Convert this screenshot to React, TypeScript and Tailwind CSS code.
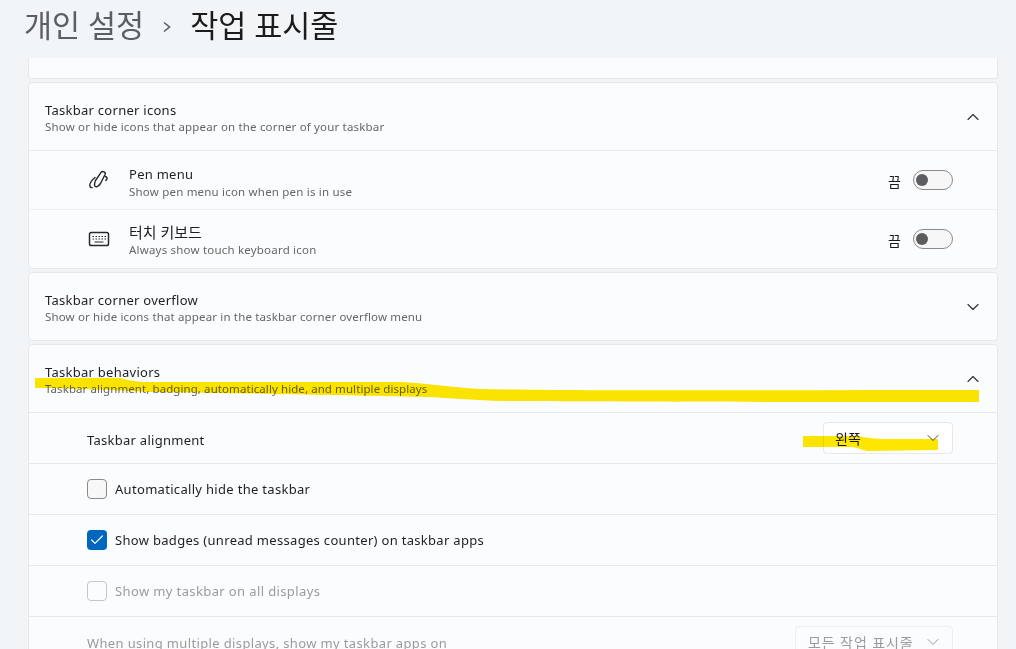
import React from 'react';
import { ChevronDown, ChevronUp, Check } from 'lucide-react';

const font = { fontFamily: '"Noto Sans", "Noto Sans CJK KR", sans-serif' };

function PenIcon() {
  return (
    <svg width="22" height="22" viewBox="0 0 22 22" fill="none" stroke="#26282b" strokeWidth="1.4" strokeLinecap="round" strokeLinejoin="round">
      <path d="M7.500 11.500 13.200 3.200c1.200-1.500 4.800-.2 4 2L12.500 14.500c-.9 1.400-2 2.600-3.500 3.200-1.300.3-2.600-.4-2.500-1.800.1-1.600.2-3 1-4.400Z" />
      <path d="M17.300 7.500c1.500.4 2.300 1.600 1.500 2.800l-1 1.200" />
      <path d="M7 8.500C4.500 10.500 2.200 13.500 1.800 16c-.2 1.500.8 2.800 2.400 2.600" />
    </svg>
  );
}

function KeyboardIcon() {
  return (
    <svg width="22" height="16" viewBox="0 0 22 16" fill="none" stroke="#26282b">
      <rect x="1.500" y="1.500" width="19" height="13" rx="1.800" strokeWidth="1.500" />
      <path d="M4.500 5.500h1.500M7.500 5.500H9M10.500 5.500H12M13.500 5.500H15M16.500 5.500H18M4.500 8h1.500M7.500 8H9M10.500 8H12M13.500 8H15M16.500 8H18M6.500 11h9" strokeWidth="1.100" />
    </svg>
  );
}

function Toggle() {
  return (
    <div className="flex items-center">
      <span className="w-[25px] text-[14px] leading-none text-[#1b1b1b] pt-[3px]">끔</span>
      <div className="w-[40px] h-[20px] rounded-full border border-[#8a8a8a] bg-[#f7f7f8] flex items-center pl-[2px]">
        <div className="w-[12px] h-[12px] rounded-full bg-[#5d5d5f]" />
      </div>
    </div>
  );
}

function CardHeader({ title, sub, open, subTracking }: { title: string; sub: string; open: boolean; subTracking: string }) {
  const Icon = open ? ChevronUp : ChevronDown;
  return (
    <div className="h-[67px] flex items-center justify-between pl-4 pr-[14px]">
      <div className="flex flex-col pt-[3px]">
        <span className="text-[13px] leading-[17px] tracking-[0.27px] text-[#1f1f1f]">{title}</span>
        <span className={`text-[11.500px] leading-[16px] text-[#666666] ${subTracking}`}>{sub}</span>
      </div>
      <Icon size={20} strokeWidth={1.400} color="#333" />
    </div>
  );
}

function IconRow({ icon, title, sub, border, korean }: { icon: React.ReactNode; title: string; sub: string; border: string; korean?: boolean }) {
  return (
    <div className={`h-[59px] flex items-center justify-between pl-[59px] pr-[44px] border-t ${border}`}>
      <div className="flex items-center">
        <div className="w-[22px] flex justify-center">{icon}</div>
        <div className={`flex flex-col ml-[19px] ${korean ? 'pt-[4px]' : 'pt-[5px]'}`}>
          <span className={`leading-[17px] text-[#1f1f1f] ${korean ? 'text-[15px]' : 'text-[13px] tracking-[0.27px]'}`}>{title}</span>
          <span className="text-[11.500px] leading-[17px] tracking-[0.2px] text-[#666666]">{sub}</span>
        </div>
      </div>
      <Toggle />
    </div>
  );
}

function CheckRow({ label, state }: { label: string; state: 'off' | 'on' | 'disabled' }) {
  return (
    <div className="h-[51px] flex items-center pl-[58px] border-t border-[#e6e8ea]">
      {state === 'on' && (
        <div className="w-[20px] h-[20px] rounded-[4px] bg-[#0067c0] flex items-center justify-center">
          <Check size={16} strokeWidth={1.800} color="#fff" />
        </div>
      )}
      {state === 'off' && <div className="w-[20px] h-[20px] rounded-[4px] border border-[#8a8a8a] bg-[#f7f7f8]" />}
      {state === 'disabled' && <div className="w-[20px] h-[20px] rounded-[4px] border border-[#c6c6c7] bg-[#fbfcfe]" />}
      <span className={`ml-2 pt-[2px] text-[13px] ${state === 'disabled' ? 'tracking-[0.38px] text-[#9b9b9c]' : 'tracking-[0.31px] text-[#1f1f1f]'}`}>{label}</span>
    </div>
  );
}

const card = 'bg-[#fbfcfe] border border-[#e6e8ea] rounded-[4px]';

export default function App() {
  return (
    <div className="relative h-[649px] w-[1016px] overflow-hidden bg-[#f2f5f8]" style={font}>
      {/* 제목 */}
      <div className="h-[58px] flex items-center pl-6 pb-[7px] text-[30.500px] leading-none">
        <span className="text-[#5c5f62]">개인 설정</span>
        <svg className="mx-[18px] mt-[3px]" width="10" height="12" viewBox="0 0 10 12" fill="none" stroke="#5c5f62" strokeWidth="1.600">
          <path d="M2 1.500 7.500 6 2 10.500" />
        </svg>
        <span className="text-[#1b1b1b]">작업 표시줄</span>
      </div>

      <div className="flex flex-col gap-[3px] pl-7 pr-[18px]">
        <div className={`${card} h-[21px] border-t-0 rounded-t-none`} />

        <div className={card}>
          <CardHeader title="Taskbar corner icons" sub="Show or hide icons that appear on the corner of your taskbar" open subTracking="tracking-[0.17px]" />
          <IconRow icon={<PenIcon />} title="Pen menu" sub="Show pen menu icon when pen is in use" border="border-[#e6e8ea]" />
          <IconRow icon={<KeyboardIcon />} title="터치 키보드" sub="Always show touch keyboard icon" border="border-[#eff1f3]" korean />
        </div>

        <div className={card}>
          <CardHeader title="Taskbar corner overflow" sub="Show or hide icons that appear in the taskbar corner overflow menu" open={false} subTracking="tracking-[0.15px]" />
        </div>

        <div className={card}>
          <CardHeader title="Taskbar behaviors" sub="Taskbar alignment, badging, automatically hide, and multiple displays" open subTracking="tracking-[0.08px]" />
          <div className="h-[51px] flex items-center justify-between pl-[58px] pr-[44px] border-t border-[#e6e8ea]">
            <span className="pt-[6px] text-[13px] tracking-[0.27px] text-[#1f1f1f]">Taskbar alignment</span>
            <div className="w-[130px] h-[32px] rounded-[4px] border border-[#e6e8ea] bg-white flex items-center justify-between pl-[11px] pr-[9px]">
              <span className="text-[14px] text-[#1b1b1b]">왼쪽</span>
              <ChevronDown size={20} strokeWidth={1.200} color="#444" />
            </div>
          </div>
          <CheckRow label="Automatically hide the taskbar" state="off" />
          <CheckRow label="Show badges (unread messages counter) on taskbar apps" state="on" />
          <CheckRow label="Show my taskbar on all displays" state="disabled" />
          <div className="h-[51px] flex items-center justify-between pl-[58px] pr-[44px] border-t border-[#e6e8ea]">
            <span className="pt-[4px] text-[13px] tracking-[0.36px] text-[#9b9b9c]">When using multiple displays, show my taskbar apps on</span>
            <div className="w-[158px] h-[32px] rounded-[4px] border border-[#eceef0] bg-[#fbfcfe] flex items-center justify-between pl-3 pr-[9px]">
              <span className="text-[14px] tracking-[0.9px] text-[#9b9b9c]">모든 작업 표시줄</span>
              <ChevronDown size={20} strokeWidth={1.200} color="#9b9b9c" />
            </div>
          </div>
        </div>
      </div>

      {/* 노란 형광펜 표시 */}
      <svg className="absolute left-0 top-0 mix-blend-multiply pointer-events-none" width="1016" height="649" fill="#ffe600">
        <path d="M35 378 L120 378 C128 380 135 382 150 382 L400 382 C425 383 450 387 480 389 C600 391 800 390 979 390 L979 402 C800 402 620 402 500 401 C470 400 450 398 430 397 C320 395 240 393 150 392 C120 390 60 388 35 388 Z" />
        <path d="M803 436 L858 436 C866 438 874 439 890 439 L938 439 L938 450 L868 451 C860 450 858 447 850 447 L803 447 Z" />
      </svg>
    </div>
  );
}
